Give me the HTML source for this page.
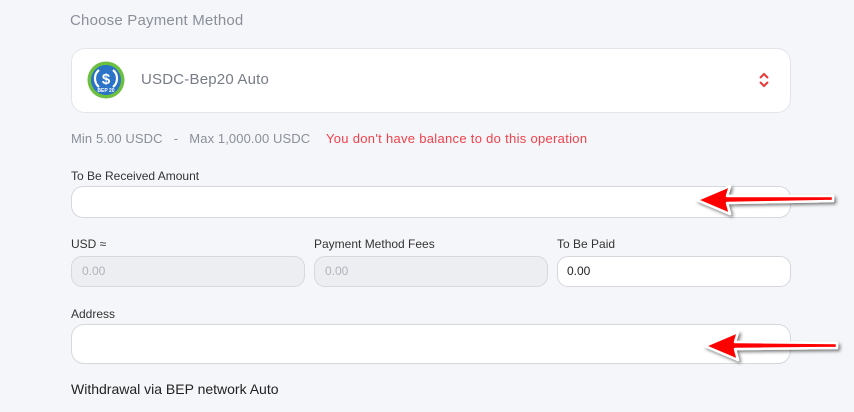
<!DOCTYPE html>
<html><head><style>
body{margin:0;width:854px;height:412px;background:#f5f6f9;font-family:"Liberation Sans",sans-serif;position:relative;overflow:hidden}
.a{position:absolute}
.box{position:absolute;background:#fff;border:1px solid #d6d8de;box-sizing:border-box}
.lbl{position:absolute;font-size:12px;color:#333}
.dis{background:#eceef1}
</style></head><body>
<div class="a" style="left:70px;top:12px;font-size:15px;color:#8a8f99;letter-spacing:0.2px">Choose Payment Method</div>
<div class="box" style="left:71px;top:48px;width:720px;height:65px;border-radius:14px;border-color:#e3e5ea"></div>
<svg class="a" style="left:87px;top:61px" width="38" height="38" viewBox="0 0 38 38">
<circle cx="19" cy="19" r="18.5" fill="#6cbf3f"/><circle cx="19" cy="19" r="15" fill="#2a73c6"/>
<path d="M12 9a11 11 0 0 0 0 17M26 9a11 11 0 0 1 0 17" stroke="#fff" stroke-width="2.2" fill="none"/>
<text x="19" y="23" font-size="15" font-weight="bold" fill="#fff" text-anchor="middle" font-family="Liberation Sans">$</text>
<text x="19" y="31" font-size="5" font-weight="bold" fill="#fff" text-anchor="middle" font-family="Liberation Sans">BEP 20</text>
</svg>
<div class="a" style="left:141px;top:71px;font-size:15px;color:#777c86;letter-spacing:0.2px">USDC-Bep20 Auto</div>
<svg class="a" style="left:758px;top:72px" width="12" height="16" viewBox="0 0 12 16"><path d="M2 6l4-4 4 4M2 10l4 4 4-4" stroke="#e53935" stroke-width="2" fill="none"/></svg>
<div class="a" style="left:71px;top:131px;font-size:13px;color:#8a8f99;letter-spacing:0.1px">Min 5.00 USDC &nbsp;&nbsp;- &nbsp;&nbsp;Max 1,000.00 USDC</div>
<div class="a" style="left:326px;top:131px;font-size:13px;color:#f2414b;letter-spacing:0.3px">You don't have balance to do this operation</div>
<div class="lbl" style="left:71px;top:169px">To Be Received Amount</div>
<div class="box" style="left:71px;top:186px;width:720px;height:32px;border-radius:12px"></div>
<div class="lbl" style="left:71px;top:237px">USD ≈</div>
<div class="lbl" style="left:314px;top:237px">Payment Method Fees</div>
<div class="lbl" style="left:557px;top:237px">To Be Paid</div>
<div class="box dis" style="left:71px;top:256px;width:234px;height:31px;border-radius:11px"></div>
<div class="box dis" style="left:314px;top:256px;width:234px;height:31px;border-radius:11px"></div>
<div class="box" style="left:557px;top:256px;width:234px;height:31px;border-radius:11px"></div>
<div class="a" style="left:82px;top:264px;font-size:12px;color:#b0b4bb">0.00</div>
<div class="a" style="left:325px;top:264px;font-size:12px;color:#b0b4bb">0.00</div>
<div class="a" style="left:567px;top:264px;font-size:12px;color:#222">0.00</div>
<div class="lbl" style="left:71px;top:307px">Address</div>
<div class="box" style="left:71px;top:324px;width:720px;height:40px;border-radius:13px"></div>
<div class="a" style="left:71px;top:381px;font-size:14px;color:#222">Withdrawal via BEP network Auto</div>
<svg class="a" style="left:0;top:0" width="854" height="412">
<defs><filter id="s"><feDropShadow dx="2" dy="2" stdDeviation="1.5" flood-opacity="0.5"/></filter></defs>
<g filter="url(#s)">
<path d="M697 200L730 186L727 196L833 196L833 201L727 203L730 214Z" fill="#f00" stroke="#fff" stroke-width="2.5" stroke-linejoin="round"/>
<path d="M705 346L738 332L735 342L837 343L837 348L735 349L738 360Z" fill="#f00" stroke="#fff" stroke-width="2.5" stroke-linejoin="round"/>
</g></svg>
</body></html>
